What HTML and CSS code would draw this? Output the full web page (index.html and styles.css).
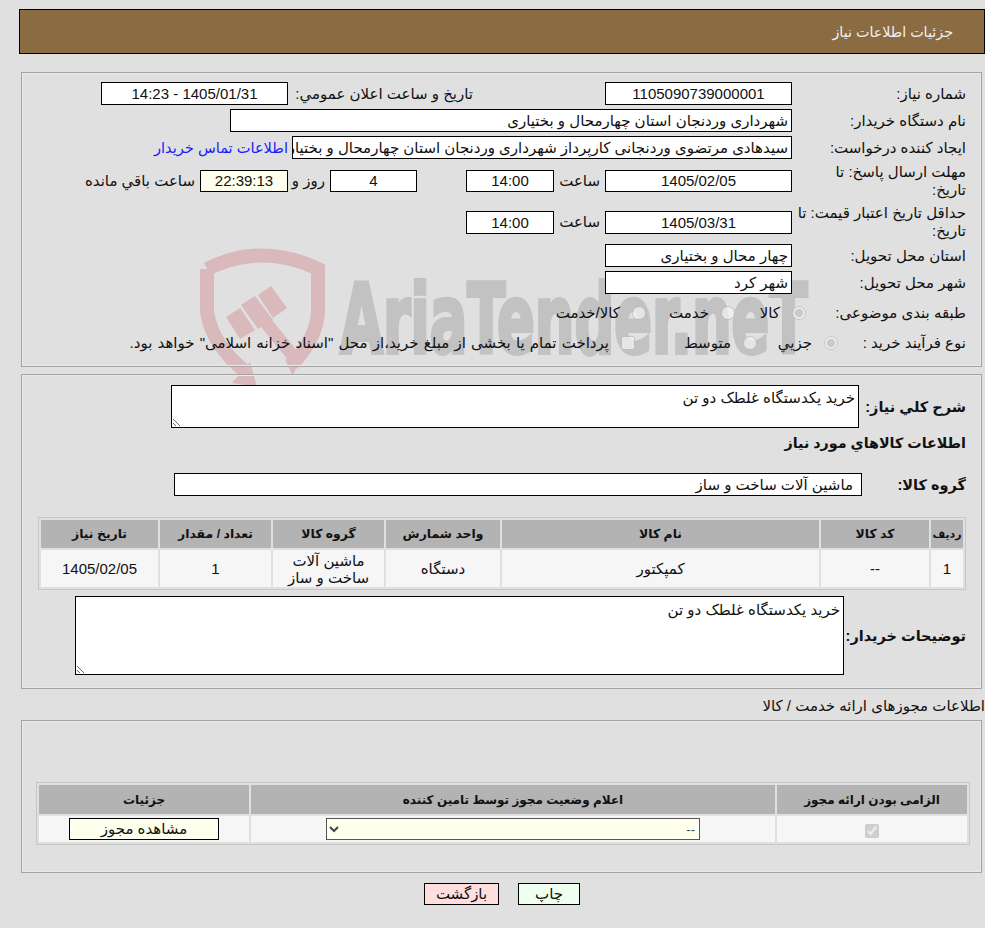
FILE: index.html
```html
<!DOCTYPE html>
<html lang="fa" dir="rtl">
<head>
<meta charset="utf-8">
<title>جزئیات اطلاعات نیاز</title>
<link rel="stylesheet" href="styles.css">
</head>
<body>
<svg class="watermark" width="985" height="400" viewBox="0 0 985 400" aria-hidden="true">
  <g class="wm-red">
    <path class="wm-shield" d="M207 269Q262 242 318 269L318 312Q316 340 292 364"/>
    <path class="wm-shield" d="M207 269L207 312Q212 345 246 372"/>
    <path class="wm-handle" d="M262 318L298 362"/>
    <polygon points="226,317 240,308 255,330 240,339"/>
    <polygon points="241,305 255,296 273,320 258,329"/>
    <polygon points="258,295 271,286 287,308 273,318"/>
    <polygon points="250,362 257,387 232,383"/>
    <polygon points="285,360 305,345 293,376"/>
  </g>
  <text class="wm-text" transform="translate(340 353) scale(.645 1)">AriaTender.neT</text>
</svg>

<header class="page-title">جزئیات اطلاعات نیاز</header>

<section class="panel panel-info">
  <div class="row">
    <div class="lbl">شماره نیاز:</div>
    <div class="field w-date center">1105090739000001</div>
    <div class="lbl-announce">تاریخ و ساعت اعلان عمومي:</div>
    <div class="field w-date center">1405/01/31 - 14:23</div>
  </div>
  <div class="row">
    <div class="lbl">نام دستگاه خریدار:</div>
    <div class="field w-buyer">شهرداری وردنجان استان چهارمحال و بختیاری</div>
  </div>
  <div class="row">
    <div class="lbl">ایجاد کننده درخواست:</div>
    <div class="field w-creator">سیدهادی مرتضوی وردنجانی کارپرداز شهرداری وردنجان استان چهارمحال و بختیاری</div>
    <a class="contact" href="#">اطلاعات تماس خریدار</a>
  </div>
  <div class="row row-tall">
    <div class="lbl">مهلت ارسال پاسخ: تا<br>تاریخ:</div>
    <div class="field w-date short center">1405/02/05</div>
    <div class="unit">ساعت</div>
    <div class="field w-time short center">14:00</div>
    <div class="field w-days short center">4</div>
    <div class="unit-day">روز و</div>
    <div class="field w-time short center remaining">22:39:13</div>
    <div class="unit-left">ساعت باقي مانده</div>
  </div>
  <div class="row row-tall row-tall-2">
    <div class="lbl">حداقل تاریخ اعتبار قیمت: تا<br>تاریخ:</div>
    <div class="field w-date center">1405/03/31</div>
    <div class="unit">ساعت</div>
    <div class="field w-time center">14:00</div>
  </div>
  <div class="row">
    <div class="lbl">استان محل تحویل:</div>
    <div class="field w-date">چهار محال و بختیاری</div>
  </div>
  <div class="row row-city">
    <div class="lbl">شهر محل تحویل:</div>
    <div class="field w-date">شهر کرد</div>
  </div>
  <div class="row row-choice row-cat">
    <div class="lbl lbl-cat">طبقه بندی موضوعی:</div>
    <label class="choice c71"><input type="radio" name="cat" checked disabled><span>کالا</span></label>
    <label class="choice c89"><input type="radio" name="cat" disabled><span>خدمت</span></label>
    <label class="choice"><input type="radio" name="cat" disabled><span>کالا/خدمت</span></label>
  </div>
  <div class="row row-choice">
    <div class="lbl lbl-proc">نوع فرآیند خرید :</div>
    <label class="choice c81"><input type="radio" name="proc" checked disabled><span>جزيي</span></label>
    <label class="choice c122"><input type="radio" name="proc" disabled><span>متوسط</span></label>
    <label class="choice"><input type="checkbox" disabled><span class="long-note">پرداخت تمام یا بخشی از مبلغ خرید،از محل "اسناد خزانه اسلامی" خواهد بود.</span></label>
  </div>
</section>

<section class="panel panel-goods">
  <div class="row row-desc">
    <div class="lbl-bold lbl-desc">شرح کلي نياز:</div>
    <textarea class="area area-short" readonly>خرید یکدستگاه غلطک دو تن</textarea>
  </div>
  <h2 class="goods-title">اطلاعات کالاهاي مورد نياز</h2>
  <div class="row row-group">
    <div class="lbl-bold lbl-group">گروه کالا:</div>
    <div class="field w-group">ماشین آلات ساخت و ساز</div>
  </div>
  <table class="grid goods-grid">
    <colgroup>
      <col class="g1"><col class="g2"><col class="g3"><col class="g4"><col class="g5"><col class="g6"><col class="g7">
    </colgroup>
    <thead>
      <tr><th class="th-row">ردیف</th><th>کد کالا</th><th>نام کالا</th><th>واحد شمارش</th><th>گروه کالا</th><th>تعداد / مقدار</th><th>تاریخ نیاز</th></tr>
    </thead>
    <tbody>
      <tr><td>1</td><td>--</td><td>کمپکتور</td><td>دستگاه</td><td class="tight">ماشین آلات ساخت و ساز</td><td>1</td><td>1405/02/05</td></tr>
    </tbody>
  </table>
  <div class="row row-notes">
    <div class="lbl-bold lbl-notes">توضیحات خریدار:</div>
    <textarea class="area area-tall" readonly>خرید یکدستگاه غلطک دو تن</textarea>
  </div>
</section>

<div class="license-title">اطلاعات مجوزهای ارائه خدمت / کالا</div>

<section class="panel panel-license">
  <table class="grid license-grid">
    <colgroup><col class="l1"><col class="l2"><col class="l3"></colgroup>
    <thead>
      <tr><th>الزامی بودن ارائه مجوز</th><th>اعلام وضعیت مجوز توسط تامین کننده</th><th>جزئیات</th></tr>
    </thead>
    <tbody>
      <tr>
        <td><input class="lic-check" type="checkbox" checked disabled></td>
        <td><select class="lic-select"><option>--</option></select></td>
        <td><button class="btn btn-view" type="button">مشاهده مجوز</button></td>
      </tr>
    </tbody>
  </table>
</section>

<div class="actions">
  <button class="btn btn-print" type="button">چاپ</button>
  <button class="btn btn-back" type="button">بازگشت</button>
</div>
</body>
</html>
```
FILE: styles.css
```css
* { box-sizing: border-box; }
html, body { margin: 0; padding: 0; }
body {
  width: 985px;
  height: 928px;
  overflow: hidden;
  background: #e0e0e0;
  color: #111;
  font-family: "Liberation Sans", "DejaVu Sans", sans-serif;
  font-size: 15px;
  line-height: 18px;
}

.watermark { position: absolute; left: 0; top: 0; z-index: -1; direction: ltr; }
.wm-red { fill: #d9b9bb; }
.wm-shield { fill: none; stroke: #d9b9bb; stroke-width: 14; }
.wm-handle { fill: none; stroke: #d9b9bb; stroke-width: 13; }
.wm-text {
  direction: ltr;
  fill: #c2c2c2;
  stroke: #c2c2c2;
  stroke-width: 4px;
  font-family: "DejaVu Sans Condensed", "DejaVu Sans", sans-serif;
  font-weight: 700;
  font-size: 96px;
}

.page-title {
  margin: 9px 0 0 19px;
  height: 45px;
  padding-right: 31px;
  background: #8b6b42;
  border: 1px solid #000;
  color: #f1f1f1;
  line-height: 44px;
  font-size: 14.3px;
}

.panel {
  margin: 0 3px 0 21px;
  border: 1px solid #a3a3a3;
  box-shadow: inset 0 0 0 1px #e9e9e9;
}
.panel-info { margin-top: 18px; height: 295px; padding: 9px 15px 0 0; }
.panel-goods { margin-top: 7px; height: 315px; padding: 10px 15px 0 0; }
.panel-license { margin-top: 6px; height: 153px; padding: 61px 11px 0 15px; }

.row { display: flex; align-items: center; margin-bottom: 4px; }
.row-tall { min-height: 36px; margin-bottom: 5px; }
.row-tall-2 { margin-bottom: 4px; }
.row-city { margin-bottom: 9px; }
.row-choice { height: 20px; }
.row-cat { margin-bottom: 10px; }

.lbl { width: 174px; flex: none; }
.lbl-cat { width: 160px; }
.lbl-proc { width: 128px; }

.field {
  flex: none;
  height: 23px;
  padding: 0 3px;
  border: 1px solid #000;
  background: #fff;
  line-height: 21px;
  white-space: nowrap;
  overflow: hidden;
}
.short { height: 22px; line-height: 20px; }
.center { text-align: center; }
.w-date { width: 187px; }
.w-buyer { width: 562px; }
.w-creator { width: 500px; }
.w-time { width: 88px; }
.w-days { width: 87px; margin-right: 49px; }
.w-group { width: 688px; padding-right: 8px; }
.remaining { background: #ffffee; }

.lbl-announce { width: 185px; margin-right: 132px; flex: none; white-space: nowrap; }
.contact { margin-right: 4px; color: #1a1aff; text-decoration: none; white-space: nowrap; font-size: 14.6px; }
.unit { width: 46px; margin-right: 5px; flex: none; }
.unit-day { width: 37px; margin-right: 5px; flex: none; }
.unit-left { margin-right: 5px; white-space: nowrap; }

.choice { display: flex; align-items: center; flex: none; white-space: nowrap; }
.choice input { width: 14px; height: 14px; margin: 0 0 0 12px; }
.c71 { width: 71px; }
.c89 { width: 89px; }
.c81 { width: 81px; }
.c122 { width: 122px; }
.long-note { word-spacing: 1px; }

.lbl-bold { flex: none; font-weight: 700; font-size: 14.5px; white-space: nowrap; }
.lbl-desc { width: 107px; }
.lbl-group { width: 104px; }
.lbl-notes { width: 122px; }

.area {
  display: block;
  flex: none;
  padding: 3px 3px;
  margin: 0;
  border: 1px solid #000;
  border-radius: 0;
  background: #fff;
  color: #111;
  font: inherit;
  outline: none;
}
.area-short { width: 688px; height: 43px; }
.area-tall { width: 769px; height: 79px; padding-top: 4px; }

.goods-title { margin: 6px 0 0; font-size: 14.3px; line-height: 18px; font-weight: 700; }
.row-desc { margin-bottom: 0; }
.row-group { margin: 21px 0 21px; }
.row-notes { margin: 6px 0 0; }

.grid {
  table-layout: fixed;
  border-collapse: separate;
  border-spacing: 2px;
  border: 1px solid #c6c6c6;
  text-align: center;
}
.grid th {
  padding: 0;
  background: #b3b3b3;
  font-weight: 700;
  font-size: 12.4px;
}
.grid .th-row { font-size: 11px; }
.grid td { padding: 0; background: #f6f6f6; line-height: 17px; }
.goods-grid { width: 928px; height: 73px; margin-left: 0; }
.goods-grid th { height: 28px; }
.goods-grid td { height: 37px; }
.tight { padding: 0 6px !important; }
.g1 { width: 32px; } .g2 { width: 108px; } .g3 { width: 317px; } .g4 { width: 114px; }
.g5 { width: 111px; } .g6 { width: 111px; } .g7 { width: 117px; }

.license-title { margin-top: 8px; height: 17px; white-space: nowrap; line-height: 17px; }

.license-grid { width: 933px; height: 61px; }
.license-grid th { height: 29px; font-size: 12px; }
.license-grid td { height: 26px; }
.l1 { width: 190px; } .l2 { width: 524px; } .l3 { width: 210px; }
.lic-check { width: 14px; height: 14px; margin: 0; vertical-align: middle; }
.lic-select {
  display: block;
  width: 374px;
  height: 22px;
  margin: 0 auto;
  margin-right: 75px;
  border: 1px solid #555;
  border-radius: 0;
  background-color: #ffffee;
  color: #444;
  font: inherit;
  font-size: 13px;
}
.btn {
  display: block;
  height: 22px;
  padding: 0;
  border: 1px solid #000;
  border-radius: 0;
  color: #111;
  font: inherit;
  line-height: 20px;
}
.btn-view { width: 150px; margin: 0 auto; background: #ffffee; }
.actions { display: flex; justify-content: center; gap: 19px; margin: 10px 0 0 19px; }
.btn-print { width: 62px; background: #efffef; }
.btn-back { width: 75px; background: #ffdede; }
```
